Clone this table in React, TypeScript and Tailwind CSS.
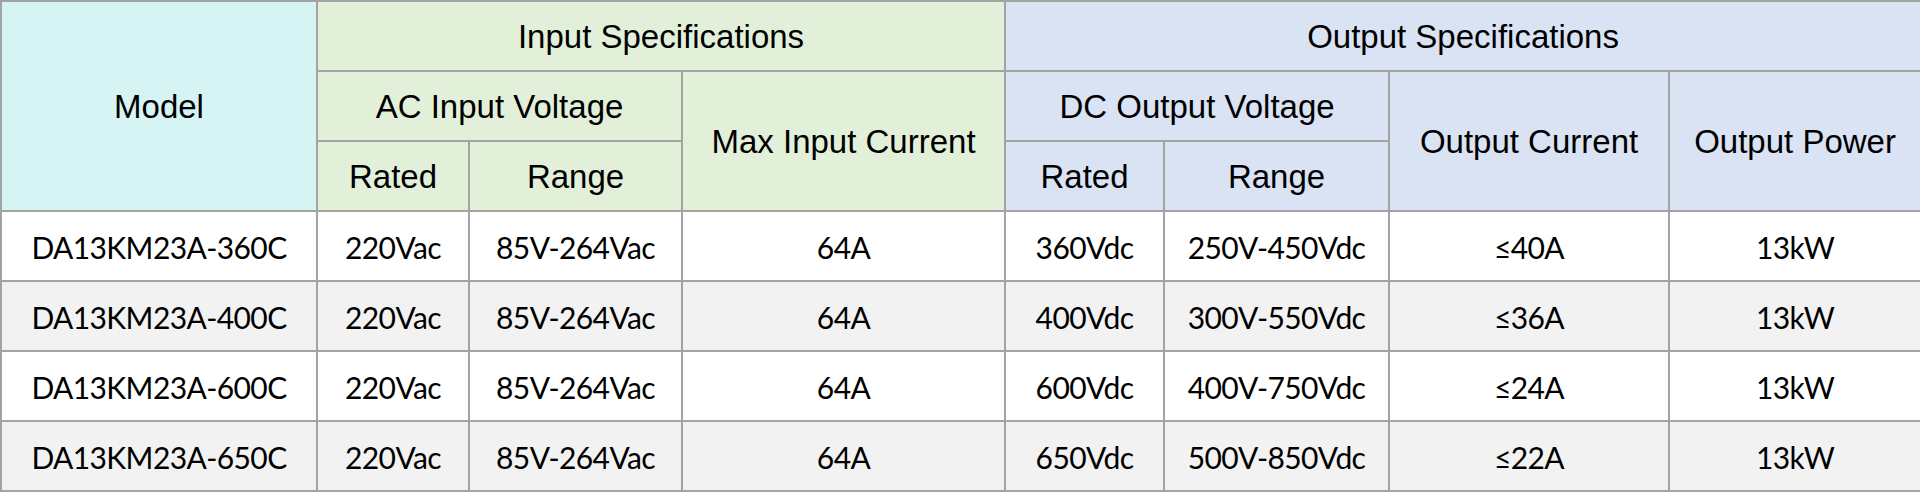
const rows = [
  ['DA13KM23A-360C', '220Vac', '85V-264Vac', '64A', '360Vdc', '250V-450Vdc', '≤40A', '13kW'],
  ['DA13KM23A-400C', '220Vac', '85V-264Vac', '64A', '400Vdc', '300V-550Vdc', '≤36A', '13kW'],
  ['DA13KM23A-600C', '220Vac', '85V-264Vac', '64A', '600Vdc', '400V-750Vdc', '≤24A', '13kW'],
  ['DA13KM23A-650C', '220Vac', '85V-264Vac', '64A', '650Vdc', '500V-850Vdc', '≤22A', '13kW'],
];

const widths = [316, 152, 213, 323, 159, 225, 280, 252];

const head = 'border-2 border-[#a3a3a3] text-center align-middle font-normal text-black';
const green = head + ' bg-[#e2f0d9]';
const blue = head + ' bg-[#dae3f3]';

export default function App() {
  return (
    <div className="w-[1920px] h-[492px] bg-white overflow-hidden">
      <table
        className="w-[1920px] table-fixed border-collapse text-[33px] leading-none"
        style={{ fontFamily: '"Liberation Sans", Arial, sans-serif' }}
      >
        <colgroup>
          {widths.map((w, i) => (
            <col key={i} style={{ width: w }} />
          ))}
        </colgroup>
        <thead>
          <tr className="h-[70px]">
            <th rowSpan={3} className={head + ' bg-[#d5f4f3]'}>Model</th>
            <th colSpan={3} className={green}>Input Specifications</th>
            <th colSpan={4} className={blue}>Output Specifications</th>
          </tr>
          <tr className="h-[70px]">
            <th colSpan={2} className={green}>AC Input Voltage</th>
            <th rowSpan={2} className={green}>Max Input Current</th>
            <th colSpan={2} className={blue}>DC Output Voltage</th>
            <th rowSpan={2} className={blue}>Output Current</th>
            <th rowSpan={2} className={blue}>Output Power</th>
          </tr>
          <tr className="h-[70px]">
            <th className={green}>Rated</th>
            <th className={green}>Range</th>
            <th className={blue}>Rated</th>
            <th className={blue}>Range</th>
          </tr>
        </thead>
        <tbody
          className="text-[30px] tracking-[-0.6px]"
          style={{ fontFamily: 'Lato, "Open Sans", sans-serif' }}
        >
          {rows.map((r, i) => (
            <tr key={i} className={'h-[70px] ' + (i % 2 ? 'bg-[#f2f2f2]' : 'bg-white')}>
              {r.map((c, j) => (
                <td key={j} className="border-2 border-[#a3a3a3] pt-[2px] text-center align-middle text-black">
                  {c}
                </td>
              ))}
            </tr>
          ))}
        </tbody>
      </table>
    </div>
  );
}
